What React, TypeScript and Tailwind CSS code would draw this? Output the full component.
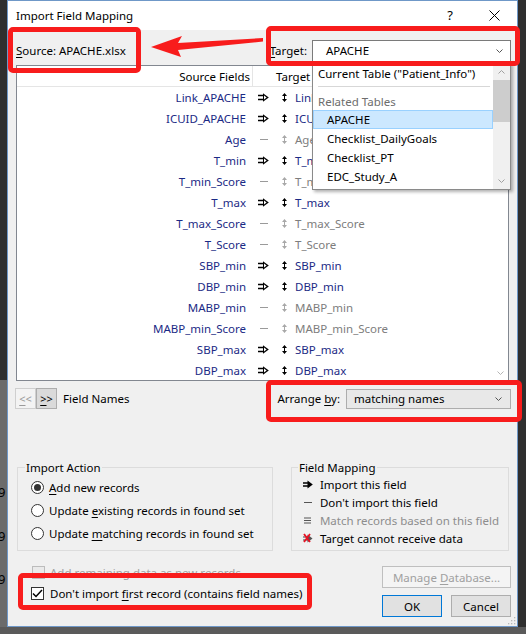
import React from "react";

const NAVY = "text-[#1b2a85]";

type Row = { s: string; t?: string; m: boolean };
const rows: Row[] = [
  { s: "Link_APACHE", m: true },
  { s: "ICUID_APACHE", m: true },
  { s: "Age", m: false },
  { s: "T_min", m: true },
  { s: "T_min_Score", m: false },
  { s: "T_max", m: true },
  { s: "T_max_Score", m: false },
  { s: "T_Score", m: false },
  { s: "SBP_min", m: true },
  { s: "DBP_min", m: true },
  { s: "MABP_min", m: false },
  { s: "MABP_min_Score", m: false },
  { s: "SBP_max", m: true },
  { s: "DBP_max", m: true },
];

function MapArrow({ on }: { on: boolean }) {
  if (!on) return <div className="ml-[2px] w-[8px] h-px bg-[#9a9a9a]" />;
  return (
    <svg width="11" height="9" viewBox="0 0 11 9">
      <path d="M0 2.5H6M0 6.5H6" stroke="#000" strokeWidth="1.4" />
      <path d="M5 0.3L10.8 4.5L5 8.7Z" fill="#000" />
      <path d="M6 2.6L8.6 4.5L6 6.4Z" fill="#fff" />
    </svg>
  );
}

function UpDown({ on }: { on: boolean }) {
  const c = on ? "#000" : "#a8a8a8";
  return (
    <svg width="5" height="9" viewBox="0 0 5 9">
      <path d="M2.5 0L5 3H0Z M0 6H5L2.5 9Z" fill={c} />
      <rect x="2" y="3" width="1" height="3" fill={c} />
    </svg>
  );
}

function Chevron({ color = "#555" }: { color?: string }) {
  return (
    <svg width="7" height="4" viewBox="0 0 7 4">
      <path d="M0.5 0.5L3.5 3.5L6.5 0.5" fill="none" stroke={color} strokeWidth="1" />
    </svg>
  );
}

function ChevronUp({ color = "#a0a0a0" }: { color?: string }) {
  return (
    <svg width="7" height="4" viewBox="0 0 7 4">
      <path d="M0.5 3.5L3.5 0.5L6.5 3.5" fill="none" stroke={color} strokeWidth="1" />
    </svg>
  );
}

function U({ children }: { children: React.ReactNode }) {
  return <span className="underline underline-offset-[2px] decoration-1">{children}</span>;
}

function Radio({ checked }: { checked?: boolean }) {
  return (
    <div className="w-[13px] h-[13px] rounded-full border border-[#333] bg-white flex items-center justify-center">
      {checked && <div className="w-[7px] h-[7px] rounded-full bg-[#333]" />}
    </div>
  );
}

export default function App() {
  return (
    <div className="relative w-[526px] h-[634px] overflow-hidden bg-[#2f2f2f] font-['Noto_Sans',sans-serif] text-[11.5px] leading-[15px] text-black">
      {/* desktop behind the dialog */}
      <div className="absolute left-0 top-[380px] w-[7px] h-[254px] bg-[#6b6b6b]" />
      <div className="absolute left-[-2px] top-[485px] text-[13px] text-black">9</div>
      <div className="absolute left-[-2px] top-[529px] text-[13px] text-black">9</div>
      <div className="absolute left-[-2px] top-[572px] text-[13px] text-black">9</div>
      <div className="absolute left-0 top-[627px] w-[526px] h-[7px] bg-[#5a5a5a]" />

      <div className="flex pl-[7px]">
        {/* dialog */}
        <div className="relative flex flex-col w-[511px] h-[627px] border border-[#6f98c8] bg-[#f0f0f0]">
          {/* title bar */}
          <div className="h-[29px] bg-white flex items-center pl-[8px] shrink-0">
            <span>Import Field Mapping</span>
            <span className="ml-auto text-[13px] mr-[36px]">?</span>
            <svg width="11" height="11" viewBox="0 0 11 11" className="mr-[17px]">
              <path d="M0.5 0.5L10.5 10.5M10.5 0.5L0.5 10.5" stroke="#000" strokeWidth="1" />
            </svg>
          </div>

          <div className="flex-1 flex flex-col px-[8px]">
            {/* top row */}
            <div className="h-[35px] pt-[6px] flex items-center justify-between shrink-0">
              <span>
                <U>S</U>ource: APACHE.xlsx
              </span>
              <div className="flex items-center -mr-[2px]">
                <span className="mr-[5px]">
                  <U>T</U>arget:
                </span>
                <div className="w-[199px] h-[22px] border border-[#7a7a7a] bg-white flex items-center pl-[13px] pr-[7px]">
                  <span>APACHE</span>
                  <span className="ml-auto">
                    <Chevron />
                  </span>
                </div>
              </div>
            </div>

            {/* list */}
            <div className="h-[316px] border border-[#828790] bg-white flex shrink-0">
              <div className="flex-1 flex flex-col overflow-hidden">
                <div className="h-[21px] border-b border-[#e5e5e5] flex items-center shrink-0">
                  <div className="w-[236px] text-right pr-[2px] border-r border-[#e5e5e5] h-full flex items-center justify-end">
                    Source Fields
                  </div>
                  <div className="pl-[23px]">Target</div>
                </div>
                {rows.map((r) => (
                  <div key={r.s} className="h-[21px] flex items-center shrink-0">
                    <div className={`w-[236px] text-right pr-[7px] ${NAVY}`}>{r.s}</div>
                    <div className="w-[24px] ml-[5px] flex items-center">
                      <MapArrow on={r.m} />
                    </div>
                    <div className="flex items-center">
                      <UpDown on={r.m} />
                    </div>
                    <div className={`ml-[8px] ${r.m ? NAVY : "text-[#7d7d7d]"}`}>{r.t ?? r.s}</div>
                  </div>
                ))}
              </div>
              <div className="w-[16px] flex flex-col items-center justify-end pb-[5px]">
                <Chevron color="#b5b5b5" />
              </div>
            </div>

            {/* nav + arrange */}
            <div className="mt-[7px] h-[21px] flex items-center justify-between shrink-0">
              <div className="flex items-center -ml-[1px]">
                <div className="w-[21px] h-[21px] border border-[#cfcfcf] bg-[#f3f3f3] flex items-center justify-center text-[#9a9a9a] text-[11px]">
                  <U>&lt;</U>&lt;
                </div>
                <div className="w-[21px] h-[21px] border border-[#adadad] bg-[#dadada] flex items-center justify-center text-[11px]">
                  <U>&gt;</U>&gt;
                </div>
                <span className="ml-[6px]">Field Names</span>
              </div>
              <div className="flex items-center -mr-[2px]">
                <span className="mr-[6px]">
                  Arrange <U>b</U>y:
                </span>
                <div className="w-[165px] h-[20px] border border-[#adadad] bg-[#e8e8e8] flex items-center pl-[7px] pr-[8px]">
                  <span>matching names</span>
                  <span className="ml-auto">
                    <Chevron />
                  </span>
                </div>
              </div>
            </div>

            {/* groups */}
            <div className="mt-[51px] flex items-start shrink-0">
              <fieldset className="ml-[1px] w-[257px] h-[91px] border border-[#dcdcdc] px-[7px]">
                <legend className="px-[1px] leading-[15px]">Import Action</legend>
                <div className="flex flex-col pl-[6px] mt-[1px]">
                  <div className="h-[23px] flex items-center gap-[5px]">
                    <Radio checked />
                    <span>
                      <U>A</U>dd new records
                    </span>
                  </div>
                  <div className="h-[23px] flex items-center gap-[5px]">
                    <Radio />
                    <span>
                      Update <U>e</U>xisting records in found set
                    </span>
                  </div>
                  <div className="h-[23px] flex items-center gap-[5px]">
                    <Radio />
                    <span>
                      Update <U>m</U>atching records in found set
                    </span>
                  </div>
                </div>
              </fieldset>
              <fieldset className="ml-[18px] w-[219px] h-[91px] border border-[#dcdcdc] px-[6px]">
                <legend className="px-[1px] leading-[15px]">Field Mapping</legend>
                <div className="flex flex-col pl-[5px]">
                  <div className="h-[18px] flex items-center">
                    <span className="w-[17px] flex items-center">
                      <svg width="10" height="9" viewBox="0 0 10 9">
                        <path d="M0 3H5.5M0 6H5.5" stroke="#000" strokeWidth="1.3" />
                        <path d="M4.5 0.5L9.8 4.5L4.5 8.5Z" fill="#000" />
                      </svg>
                    </span>
                    <span>Import this field</span>
                  </div>
                  <div className="h-[18px] flex items-center">
                    <span className="w-[17px] flex items-center">
                      <span className="ml-[1px] block w-[8px] h-px bg-[#555]" />
                    </span>
                    <span>Don't import this field</span>
                  </div>
                  <div className="h-[18px] flex items-center">
                    <span className="w-[17px] flex items-center">
                      <svg width="7" height="7" viewBox="0 0 7 7" className="ml-[1px]">
                        <path d="M0 1H7M0 3.5H7M0 6H7" stroke="#555" strokeWidth="1" />
                      </svg>
                    </span>
                    <span className="text-[#8d8d8d]">Match records based on this field</span>
                  </div>
                  <div className="h-[18px] flex items-center">
                    <span className="w-[17px] flex items-center">
                      <svg width="10" height="10" viewBox="0 0 10 10">
                        <path d="M0 4H5M0 7H5" stroke="#444" strokeWidth="1" />
                        <path d="M4.5 1.5L9.5 5.5L4.5 9.5Z" fill="#555" />
                        <path d="M1 1L7 9M7 1L1 9" stroke="#e81123" strokeWidth="1.8" />
                      </svg>
                    </span>
                    <span>Target cannot receive data</span>
                  </div>
                </div>
              </fieldset>
            </div>

            {/* bottom */}
            <div className="mt-[15px] flex justify-between shrink-0">
              <div className="flex flex-col ml-[15px]">
                <div className="h-[13px] flex items-center gap-[5px]">
                  <div className="w-[13px] h-[13px] border border-[#bcbcbc] bg-[#eaeaea] ml-[1px]" />
                  <span className="text-[#a0a0a0]">Add remaining data as new records</span>
                </div>
                <div className="mt-[8px] h-[13px] flex items-center gap-[6px]">
                  <div className="w-[13px] h-[13px] border border-[#333] bg-white flex items-center justify-center">
                    <svg width="11" height="9" viewBox="0 0 11 9">
                      <path d="M1 4.5L4 7.5L10 1" fill="none" stroke="#000" strokeWidth="1.5" />
                    </svg>
                  </div>
                  <span>
                    Don't import <U>f</U>irst record (contains field names)
                  </span>
                </div>
              </div>
              <div className="flex flex-col items-end -mr-[2px]">
                <div className="w-[129px] h-[22px] border border-[#bfbfbf] bg-[#f4f4f4] flex items-center justify-center text-[#a0a0a0]">
                  <span>
                    Manage <U>D</U>atabase...
                  </span>
                </div>
                <div className="mt-[7px] flex gap-[9px]">
                  <div className="w-[60px] h-[22px] border border-[#0078d7] bg-[#e1e1e1] flex items-center justify-center">
                    OK
                  </div>
                  <div className="w-[60px] h-[22px] border border-[#adadad] bg-[#e1e1e1] flex items-center justify-center">
                    Cancel
                  </div>
                </div>
              </div>
            </div>
          </div>

          {/* resize grip */}
          <svg width="8" height="8" viewBox="0 0 8 8" className="absolute right-[1px] bottom-[1px]">
            <g fill="#b8b8b8">
              <rect x="6" y="0" width="1.3" height="1.3" />
              <rect x="3" y="3" width="1.3" height="1.3" />
              <rect x="6" y="3" width="1.3" height="1.3" />
              <rect x="0" y="6" width="1.3" height="1.3" />
              <rect x="3" y="6" width="1.3" height="1.3" />
              <rect x="6" y="6" width="1.3" height="1.3" />
            </g>
          </svg>
        </div>
      </div>

      {/* dropdown popup */}
      <div className="absolute left-[312px] top-[62px] w-[199px] h-[128px] bg-white border border-[#8a8a8a] shadow-[2px_2px_3px_rgba(0,0,0,0.3)] flex text-[11.5px]">
        <div className="flex-1 flex flex-col pt-px">
          <div className="h-[18px] flex items-center pl-[5px]">Current Table ("Patient_Info")</div>
          <div className="mt-[4px] h-px bg-[#d7d7d7] ml-[5px] mr-[3px]" />
          <div className="mt-[5px] h-[18px] flex items-center pl-[5px] text-[#6d6d6d]">Related Tables</div>
          <div className="h-[19px] flex items-center pl-[13px] bg-[#cce8ff] border border-[#99d1ff]">APACHE</div>
          <div className="h-[19px] flex items-center pl-[14px]">Checklist_DailyGoals</div>
          <div className="h-[19px] flex items-center pl-[14px]">Checklist_PT</div>
          <div className="h-[19px] flex items-center pl-[14px]">EDC_Study_A</div>
        </div>
        <div className="w-[17px] bg-[#f0f0f0] flex flex-col items-center">
          <div className="h-[17px] flex items-center justify-center">
            <ChevronUp />
          </div>
          <div className="w-[17px] h-[42px] bg-[#cdcdcd]" />
          <div className="mt-auto h-[17px] flex items-center justify-center">
            <Chevron color="#a0a0a0" />
          </div>
        </div>
      </div>

      {/* red annotations */}
      <div className="pointer-events-none absolute left-[8px] top-[27px] w-[133px] h-[46px] border-[5px] border-[#f81c1c] rounded-[5px]" />
      <div className="pointer-events-none absolute left-[266px] top-[26px] w-[254px] h-[40px] border-[5px] border-[#f81c1c] rounded-[5px]" />
      <div className="pointer-events-none absolute left-[266px] top-[380px] w-[256px] h-[42px] border-[5px] border-[#f81c1c] rounded-[5px]" />
      <div className="pointer-events-none absolute left-[18px] top-[573px] w-[294px] h-[37px] border-[5px] border-[#f81c1c] rounded-[5px]" />
      <svg className="pointer-events-none absolute left-0 top-0" width="526" height="634" viewBox="0 0 526 634">
        <polygon
          points="151,47 182,36 178,43 263,38 263,41.5 178,50 181,57"
          fill="#f81c1c"
        />
      </svg>
    </div>
  );
}
